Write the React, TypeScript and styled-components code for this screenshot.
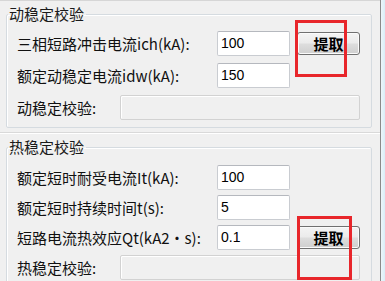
import React from "react";
import styled, { createGlobalStyle } from "styled-components";

const GlobalStyle = createGlobalStyle`
  html, body {
    margin: 0;
    padding: 0;
    background: #f0f0f0;
  }
  body {
    font-family: "Noto Sans CJK SC", "Liberation Sans", sans-serif;
  }
`;

const Window = styled.div`
  display: flex;
  width: 385px;
  height: 281px;
  overflow: hidden;
  background: #f0f0f0;
`;

const Panel = styled.div`
  width: 380px;
  display: flex;
  flex-direction: column;
  border-right: 1px solid #8a8a8a;
`;

const EdgeStrip = styled.div`
  flex: 1;
  background: linear-gradient(to right, #eef6fa, #d8eef8);
`;

const TopEdge = styled.div`
  height: 2px;
  border-bottom: 1px solid #d6d6d6;
  margin-bottom: 5px;
  background: #f7f7f7;
`;

const Divider = styled.div`
  height: 0;
  margin: 4px 0 5px;
  border-top: 1px solid #d9d9d9;
  border-bottom: 1px solid #ffffff;
`;

const Group = styled.fieldset<{ $padTop: number; $gap: number }>`
  box-sizing: border-box;
  width: 366px;
  margin: 0 0 0 6px;
  padding: ${(p) => p.$padTop}px 0 7px 10px;
  border: 1px solid #d5dbe0;
  border-radius: 2px;
  box-shadow: inset 1px 1px 0 #ffffff;
  display: flex;
  flex-direction: column;
  gap: ${(p) => p.$gap}px;
  min-width: 0;
`;

const Legend = styled.legend`
  padding: 0 2px 0 1px;
  margin-left: -9px;
  font-size: 15px;
  line-height: 16px;
  color: #1a1a1a;
`;

const Row = styled.div`
  display: flex;
  align-items: center;
  height: 25px;
`;

const Label = styled.span<{ $width: number }>`
  width: ${(p) => p.$width}px;
  flex-shrink: 0;
  font-size: 15px;
  line-height: 25px;
  color: #111;
  white-space: nowrap;
  overflow: visible;
`;

const Input = styled.div`
  box-sizing: border-box;
  width: 73px;
  height: 25px;
  background: #ffffff;
  border: 1px solid #c9ccd1;
  border-top-color: #b5b8be;
  border-radius: 2px;
  padding: 0 3px;
  font-family: "Liberation Sans", Arial, sans-serif;
  font-size: 14px;
  line-height: 23px;
  color: #000;
`;

const ResultField = styled.div`
  box-sizing: border-box;
  width: 240px;
  height: 25px;
  background: #f0f0f0;
  border: 1px solid #d2d2d2;
  border-radius: 2px;
  box-shadow: inset 1px 1px 0 #ffffff;
`;

const ButtonWrap = styled.div`
  position: relative;
  margin-left: 7px;
  display: flex;
`;

const FetchButton = styled.button`
  box-sizing: border-box;
  width: 63px;
  height: 23px;
  padding: 0;
  border: 1px solid #707070;
  border-radius: 3px;
  background: linear-gradient(#f4f4f4 0%, #ebebeb 48%, #dddddd 52%, #cfcfcf 100%);
  box-shadow: inset 0 0 0 1px #fbfbfb;
  font-family: "Noto Sans CJK SC", sans-serif;
  font-size: 15px;
  font-weight: 700;
  line-height: 21px;
  color: #000;
`;

const Highlight = styled.div<{ $left: number; $top: number; $w: number; $h: number }>`
  position: absolute;
  left: ${(p) => p.$left}px;
  top: ${(p) => p.$top}px;
  width: ${(p) => p.$w}px;
  height: ${(p) => p.$h}px;
  box-sizing: border-box;
  border: 3px solid #e8262b;
  pointer-events: none;
`;

type Field = { label: string; value: string; fetch?: boolean };

const dynamicFields: Field[] = [
  { label: "三相短路冲击电流ich(kA):", value: "100", fetch: true },
  { label: "额定动稳定电流idw(kA):", value: "150" },
];

const thermalFields: Field[] = [
  { label: "额定短时耐受电流It(kA):", value: "100" },
  { label: "额定短时持续时间t(s):", value: "5" },
  { label: "短路电流热效应Qt(kA2·s):", value: "0.1", fetch: true },
];

function FieldRow({ field, mark }: { field: Field; mark: { left: number; top: number; w: number; h: number } }) {
  return (
    <Row>
      <Label $width={200}>{field.label}</Label>
      <Input>{field.value}</Input>
      {field.fetch && (
        <ButtonWrap>
          <FetchButton>提取</FetchButton>
          <Highlight $left={mark.left} $top={mark.top} $w={mark.w} $h={mark.h} />
        </ButtonWrap>
      )}
    </Row>
  );
}

export default function App() {
  return (
    <>
      <GlobalStyle />
      <Window>
        <Panel>
          <TopEdge />
          <Group $padTop={9} $gap={7}>
            <Legend>动稳定校验</Legend>
            {dynamicFields.map((f) => (
              <FieldRow key={f.label} field={f} mark={{ left: -2, top: -12, w: 52, h: 57 }} />
            ))}
            <Row>
              <Label $width={103}>动稳定校验:</Label>
              <ResultField />
            </Row>
          </Group>
          <Divider />
          <Group $padTop={10} $gap={5}>
            <Legend>热稳定校验</Legend>
            {thermalFields.map((f) => (
              <FieldRow key={f.label} field={f} mark={{ left: 0, top: -10, w: 55, h: 64 }} />
            ))}
            <Row>
              <Label $width={103}>热稳定校验:</Label>
              <ResultField />
            </Row>
          </Group>
        </Panel>
        <EdgeStrip />
      </Window>
    </>
  );
}
